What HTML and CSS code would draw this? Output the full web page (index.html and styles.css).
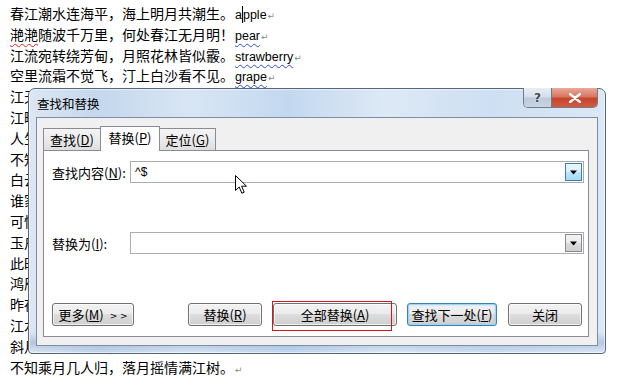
FILE: index.html
```html
<!DOCTYPE html>
<html>
<head>
<meta charset="utf-8">
<link rel="stylesheet" href="styles.css">
</head>
<body>
<div class="doc">
  <p>春江潮水连海平，海上明月共潮生。<span class="en">a<span class="caret"></span>pple</span><span class="pm">↵</span></p>
  <p><span class="sp-red">滟滟</span>随波千万里，何处春江无月明！<span class="en sp-blue">pear</span><span class="pm">↵</span></p>
  <p>江流宛转绕芳甸，月照花林皆似霰。<span class="en sp-blue">strawberry</span><span class="pm">↵</span></p>
  <p>空里流霜不觉飞，汀上白沙看不见。<span class="en sp-blue">grape</span><span class="pm">↵</span></p>
  <p>江天一色无纤尘，皎皎空中孤月轮。<span class="pm">↵</span></p>
  <p>江畔何人初见月？江月何年初照人？<span class="pm">↵</span></p>
  <p>人生代代无穷已，江月年年望相似。<span class="pm">↵</span></p>
  <p>不知江月待何人，但见长江送流水。<span class="pm">↵</span></p>
  <p>白云一片去悠悠，青枫浦上不胜愁。<span class="pm">↵</span></p>
  <p>谁家今夜扁舟子？何处相思明月楼？<span class="pm">↵</span></p>
  <p>可怜楼上月徘徊，应照离人妆镜台。<span class="pm">↵</span></p>
  <p>玉户帘中卷不去，捣衣砧上拂还来。<span class="pm">↵</span></p>
  <p>此时相望不相闻，愿逐月华流照君。<span class="pm">↵</span></p>
  <p>鸿雁长飞光不度，鱼龙潜跃水成文。<span class="pm">↵</span></p>
  <p>昨夜闲潭梦落花，可怜春半不还家。<span class="pm">↵</span></p>
  <p>江水流春去欲尽，江潭落月复西斜。<span class="pm">↵</span></p>
  <p>斜月沉沉藏海雾，碣石潇湘无限路。<span class="pm">↵</span></p>
  <p>不知乘月几人归，落月摇情满江树。<span class="pm">↵</span></p>
</div>

<div class="win">
  <div class="titlebar">
    <span class="title">查找和替换</span>
    <div class="caption-btns">
      <span class="cbtn help">?</span>
      <span class="cbtn close">
        <svg width="12" height="10" viewBox="0 0 12 10"><path d="M1 1 L11 9 M11 1 L1 9" stroke="#fff" stroke-width="2.4" stroke-linecap="round"/></svg>
      </span>
    </div>
  </div>
  <div class="client">
    <div class="tabs">
      <div class="tab t1">查找(<u>D</u>)</div>
      <div class="tab t2 active">替换(<u>P</u>)</div>
      <div class="tab t3">定位(<u>G</u>)</div>
    </div>
    <div class="panel">
      <div class="row row-find">
        <span class="lbl">查找内容(<u>N</u>):</span>
        <div class="combo">
          <span class="val">^$</span>
          <span class="drop hot"><svg width="7" height="5" viewBox="0 0 7 5"><path d="M0 0.5 H7 L3.5 4.5 Z" fill="#000"/></svg></span>
        </div>
      </div>
      <div class="row row-repl">
        <span class="lbl">替换为(<u>I</u>):</span>
        <div class="combo">
          <span class="val"></span>
          <span class="drop"><svg width="7" height="5" viewBox="0 0 7 5"><path d="M0 0.5 H7 L3.5 4.5 Z" fill="#000"/></svg></span>
        </div>
      </div>
      <div class="btnrow">
        <span class="btn b-more">更多(<u>M</u>) <span class="gt">&gt; &gt;</span></span>
        <span class="btn b-rep">替换(<u>R</u>)</span>
        <span class="btn b-all">全部替换(<u>A</u>)</span>
        <span class="btn b-next default">查找下一处(<u>F</u>)</span>
        <span class="btn b-close">关闭</span>
      </div>
    </div>
  </div>
</div>

<div class="redbox"></div>
<svg class="cursor" width="13" height="20" viewBox="0 0 13 20">
  <path d="M0.5 0.5 L0.5 15.5 L4.2 12 L6.8 18.2 L9.2 17.2 L6.6 11.2 L11.5 11.2 Z" fill="#fff" stroke="#000" stroke-width="1" stroke-linejoin="miter"/>
</svg>
</body>
</html>
```

FILE: styles.css
```css
html, body {
  margin: 0;
  padding: 0;
  background: #ffffff;
}
body {
  width: 627px;
  height: 381px;
  overflow: hidden;
  position: relative;
}
.doc {
  padding: 3px 0 0 10px;
  font-family: "Noto Sans CJK SC", sans-serif;
  font-size: 14px;
  color: #000;
}
.doc p {
  margin: 0;
  height: 20.8px;
  line-height: 20.8px;
  white-space: nowrap;
}
.en {
  font-family: "Liberation Sans", Arial, sans-serif;
  font-size: 12.5px;
  margin-left: 1px;
}
.caret {
  display: inline-block;
  width: 1px;
  height: 17px;
  background: #000;
  vertical-align: -4px;
}
.pm {
  font-family: "DejaVu Sans", sans-serif;
  font-size: 9px;
  color: #8a8a8a;
  margin-left: 1px;
}
.sp-blue {
  text-decoration: underline wavy #2b4bd6;
  text-decoration-thickness: 1px;
  text-underline-offset: 3px;
}
.sp-red {
  text-decoration: underline wavy #e02020;
  text-decoration-thickness: 1px;
  text-underline-offset: 3px;
}

/* window */
.win {
  position: absolute;
  left: 28px;
  top: 88px;
  width: 578px;
  height: 266px;
  box-sizing: border-box;
  border: 1px solid #56657a;
  border-radius: 7px 7px 4px 4px;
  padding: 0 7px 7px 7px;
  display: flex;
  flex-direction: column;
  background:
    linear-gradient(180deg, rgba(255,255,255,0) 0%, rgba(255,255,255,0) 92%, rgba(110,140,185,0.35) 96%, rgba(255,255,255,0) 100%),
    linear-gradient(90deg, #dce7f2 0%, #c4d7ec 12%, #d8e6f4 28%, #c3d8ef 45%, #dde9f6 62%, #cddff2 80%, #dbe8f5 100%);
  box-shadow: inset 0 0 0 1px rgba(255,255,255,0.55);
  font-family: "Noto Sans CJK SC", sans-serif;
  color: #000;
}
.titlebar {
  height: 28px;
  display: flex;
  align-items: flex-start;
  flex-shrink: 0;
}
.title {
  flex: 1;
  font-size: 12.5px;
  line-height: 30px;
  padding-left: 1px;
  color: #000;
}
.caption-btns {
  display: flex;
  height: 19px;
  border: 1px solid #6d7b8d;
  border-top: none;
  border-radius: 0 0 5px 5px;
  overflow: hidden;
  margin-top: -1px;
}
.cbtn {
  display: flex;
  align-items: center;
  justify-content: center;
  height: 100%;
}
.help {
  width: 27px;
  background: linear-gradient(180deg, #e9eef4 0%, #d6dfe9 45%, #bccad9 55%, #c9d5e2 100%);
  color: #3d4a59;
  font-family: "DejaVu Sans", sans-serif;
  font-size: 12px;
  font-weight: bold;
  border-right: 1px solid #6d7b8d;
  text-shadow: 0 0 2px #fff;
}
.close {
  width: 45px;
  background: linear-gradient(180deg, #e9a99b 0%, #d9765f 45%, #c5452d 55%, #d35a3f 100%);
}

.client {
  flex: 1;
  border: 1px solid #7d8ea4;
  background: #f0f0f0;
  padding: 8px 8px 8px 6px;
  display: flex;
  flex-direction: column;
}
.tabs {
  display: flex;
  align-items: flex-end;
  height: 25px;
  position: relative;
  z-index: 1;
  flex-shrink: 0;
}
.tab {
  box-sizing: border-box;
  height: 23px;
  border: 1px solid #898c95;
  border-right: none;
  background: linear-gradient(180deg, #f4f4f4 0%, #ebebeb 50%, #dedede 100%);
  font-size: 13px;
  line-height: 21px;
  text-align: center;
}
.t1 { width: 57px; }
.t2 { width: 60px; }
.t3 { width: 56px; border-right: 1px solid #898c95; }
.tab.active {
  height: 25px;
  background: #fff;
  border-bottom: none;
  border-right: 1px solid #898c95;
  line-height: 22px;
}
.tab.active + .tab { border-left: none; }
.panel {
  flex: 1;
  margin-top: -1px;
  border: 1px solid #898c95;
  background: #fff;
  padding: 10px 4px 10px 8px;
  display: flex;
  flex-direction: column;
}
.row {
  display: flex;
  align-items: center;
}
.row-find { height: 22px; }
.row-repl { height: 22px; margin-top: 49px; }
.lbl {
  width: 78px;
  font-size: 13px;
  white-space: nowrap;
  flex-shrink: 0;
}
.combo {
  flex: 1;
  height: 22px;
  box-sizing: border-box;
  border: 1px solid #a9acb2;
  background: #fff;
  display: flex;
  padding: 1px;
}
.val {
  flex: 1;
  font-family: "Liberation Sans", sans-serif;
  font-size: 12px;
  line-height: 18px;
  padding-left: 3px;
}
.drop {
  width: 17px;
  box-sizing: border-box;
  border: 1px solid #8a8a8a;
  background: linear-gradient(180deg, #f2f2f2 0%, #ebebeb 50%, #dcdcdc 50%, #cfcfcf 100%);
  display: flex;
  align-items: center;
  justify-content: center;
}
.drop.hot {
  border-color: #3c7fb1;
  background: linear-gradient(180deg, #eaf6fd 0%, #d9f0fc 50%, #bee6fd 50%, #a7d9f5 100%);
}
.btnrow {
  margin-top: auto;
  height: 23px;
  display: flex;
}
.btn {
  box-sizing: border-box;
  height: 23px;
  border: 1px solid #707070;
  border-radius: 3px;
  background: linear-gradient(180deg, #f2f2f2 0%, #ebebeb 50%, #dddddd 50%, #cfcfcf 100%);
  box-shadow: inset 0 0 0 1px rgba(255,255,255,0.7);
  font-size: 13px;
  line-height: 21px;
  text-align: center;
  white-space: nowrap;
}
.gt {
  font-family: "DejaVu Sans", sans-serif;
  font-size: 9px;
  margin-left: 3px;
  vertical-align: 1px;
}
.b-more { width: 82px; }
.b-rep { width: 74px; margin-left: 54px; }
.b-all { width: 124px; margin-left: 11px; }
.b-next { width: 90px; margin-left: 10px; }
.b-close { width: 74px; margin-left: 11px; }
.btn.default {
  border-color: #3c7fb1;
  box-shadow: inset 0 0 0 1px #9ed6f5, inset 0 0 2px 1px rgba(120,200,240,0.5);
}
.redbox {
  position: absolute;
  left: 272px;
  top: 301px;
  width: 120px;
  height: 30px;
  box-sizing: border-box;
  border: 1px solid #d2141c;
}
.cursor {
  position: absolute;
  left: 235px;
  top: 175px;
}
```
